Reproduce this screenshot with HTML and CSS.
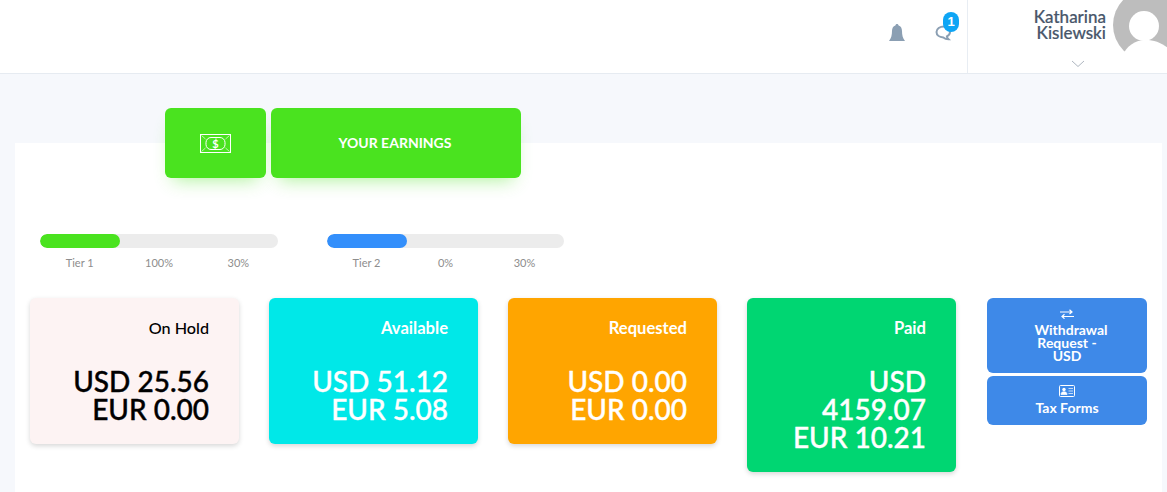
FILE: index.html
```html
<!DOCTYPE html>
<html lang="en">
<head>
<meta charset="utf-8">
<title>Your Earnings</title>
<link rel="stylesheet" href="styles.css">
</head>
<body>
<header class="topbar">
  <div class="icons">
    <svg class="bell" width="18" height="20" viewBox="0 0 18 20"><path d="M9 1c.9 0 1.500.6 1.600 1.500C13 3.300 14 5.400 14 8c0 4 .7 7.200 3 10H1c2.300-2.800 3-6 3-10 0-2.600 1-4.700 3.400-5.500C7.500 1.600 8.100 1 9 1z" fill="#8b9fb3"/></svg>
    <div class="chat">
      <svg width="20" height="20" viewBox="0 0 20 20"><path d="M10 3.500c-4.200 0-7.500 2.300-7.500 5.500 0 3 2.900 5.300 6.800 5.500 1.500 1.300 3.300 1.800 5.200 1.800-1-.9-1.500-1.900-1.600-3 1.900-1 3.100-2.600 3.100-4.300 0-3.200-2-5.500-6-5.500z" fill="none" stroke="#8b9fb3" stroke-width="2"/></svg>
      <span class="badge">1</span>
    </div>
  </div>
  <div class="user">
    <div class="user-text">
      <div class="user-name">Katharina<br>Kislewski</div>
      <svg class="chev" width="14" height="8" viewBox="0 0 14 8"><path d="M1 1l6 5.500L13 1" fill="none" stroke="#aeb6c0" stroke-width="1"/></svg>
    </div>
    <svg class="avatar" width="72" height="72" viewBox="0 0 72 72"><circle cx="36" cy="36" r="36" fill="#bdbdbd"/><circle cx="31" cy="37" r="15" fill="#fff"/><path d="M9 68c4-11 13-17 24-17s24 6 28 17v4H9z" fill="#fff"/></svg>
  </div>
</header>
<main class="content">
  <section class="panel">
    <div class="tabs">
      <div class="tab tab-icon">
        <svg width="31" height="19" viewBox="0 0 31 19"><rect x=".5" y=".5" width="30" height="18" fill="none" stroke="#fff"/><path d="M1.500 1.500l4 3.500M29.500 1.500l-4 3.500M1.500 17.500l4-3.500M29.500 17.500l-4-3.500" fill="none" stroke="#bff2ae"/><rect x="6" y="3.500" width="19" height="12" rx="5" fill="none" stroke="#fff"/></svg>
        <span class="dollar">$</span>
      </div>
      <div class="tab tab-title">YOUR EARNINGS</div>
    </div>
    <div class="tiers">
      <div class="tier">
        <div class="track"><div class="fill fill-green"></div></div>
        <div class="tier-labels"><span>Tier 1</span><span>100%</span><span>30%</span></div>
      </div>
      <div class="tier tier-second">
        <div class="track"><div class="fill fill-blue"></div></div>
        <div class="tier-labels"><span>Tier 2</span><span>0%</span><span>30%</span></div>
      </div>
    </div>
    <div class="cards">
      <div class="card card-hold"><div class="card-title">On Hold</div><div class="card-amount">USD 25.56<br>EUR 0.00</div></div>
      <div class="card card-available"><div class="card-title">Available</div><div class="card-amount">USD 51.12<br>EUR 5.08</div></div>
      <div class="card card-requested"><div class="card-title">Requested</div><div class="card-amount">USD 0.00<br>EUR 0.00</div></div>
      <div class="card card-paid"><div class="card-title">Paid</div><div class="card-amount">USD<br>4159.07<br>EUR 10.21</div></div>
      <div class="actions">
        <button class="action action-tall">
          <svg width="14" height="10" viewBox="0 0 14 10"><path d="M0 3h12M9.500.7L12 3 9.500 5M14 7.500H2M4.500 5.300L2 7.500l2.500 2.200" fill="none" stroke="#fff" stroke-width="1.200"/></svg>
          <span class="action-label"><span class="line-shift">Withdrawal</span><br>Request -<br>USD</span>
        </button>
        <button class="action action-short">
          <svg width="16" height="12" viewBox="0 0 16 12"><rect x=".5" y=".5" width="15" height="11" rx="1" fill="none" stroke="#fff"/><circle cx="5" cy="4.500" r="1.700" fill="#fff"/><path d="M2 9.500c0-2 1.300-2.700 3-2.700s3 .7 3 2.700zM9.500 3.500H14M9.500 6H14M9.500 8.500H14" fill="#fff" stroke="#fff" stroke-width=".7"/></svg>
          <span class="action-label">Tax Forms</span>
        </button>
      </div>
    </div>
  </section>
</main>
</body>
</html>
```
FILE: styles.css
```css
* { box-sizing: border-box; }
html, body { margin: 0; height: 100%; overflow: hidden; }
body { background: #f6f8fc; font-family: "Lato", "Noto Sans", sans-serif; color: #000; }
.topbar { height: 74px; background: #fff; border-bottom: 1px solid #e6ebf1; display: flex; justify-content: flex-end; overflow: hidden; }
.icons { display: flex; align-items: center; gap: 28px; padding: 0 8px 8px 1px; width: 80px; }
.bell { flex: none; margin-top: 1px; }
.chat { position: relative; width: 20px; height: 20px; flex: none; }
.badge { position: absolute; top: -11px; left: 9px; width: 16px; height: 20px; border-radius: 8px; background: #0ea5f5; color: #fff; font: 700 13px/20px "Liberation Sans", sans-serif; text-align: center; }
.user { width: 200px; border-left: 1px solid #e8edf3; display: flex; justify-content: flex-end; }
.user-text { display: flex; flex-direction: column; align-items: flex-end; padding: 9px 7px 0 0; flex: 1; }
.user-name { font-size: 17px; line-height: 16px; font-weight: 500; color: #48566a; text-align: right; -webkit-text-stroke: .2px #48566a; }
.chev { align-self: flex-end; margin: 19px 21px 0 0; }
.avatar { flex: none; margin: -11px -18px 0 0; }
.content { padding: 69px 5px 0 15px; }
.panel { display: flow-root; background: #fff; height: 349px; padding: 0 0 0 15px; }
.tabs { display: flex; gap: 5px; margin: -35px 0 0 135px; }
.tab { height: 70px; background: #4ae31f; border-radius: 6px; box-shadow: 0 10px 18px -8px rgba(74,227,31,.45); color: #fff; display: flex; align-items: center; justify-content: center; }
.tab-icon { width: 101px; position: relative; }
.tab-title { width: 250px; font-size: 14px; font-weight: 700; padding: 0 2px 2px 0; }
.dollar { position: absolute; inset: 0; display: flex; align-items: center; justify-content: center; font-size: 11px; font-weight: 700; }
.tiers { display: flex; margin: 56px 0 0 10px; }
.tier { width: 238px; }
.tier-second { margin-left: 49px; width: 237px; }
.track { height: 14px; border-radius: 7px; background: #ececec; overflow: hidden; }
.fill { height: 100%; width: 80px; border-radius: 7px; }
.fill-green { background: #4ae31f; }
.fill-blue { background: #338ffb; }
.tier-labels { display: grid; grid-template-columns: repeat(3, 1fr); margin-top: 8px; font-size: 11px; line-height: 14px; color: #8d8d8d; text-align: center; }
.cards { display: flex; align-items: flex-start; margin-top: 28px; }
.card { width: 209px; margin-right: 30px; padding: 20px 30px 0 0; border-radius: 6px; text-align: right; color: #fff; box-shadow: 0 2px 5px rgba(0,0,0,.16); flex: none; }
.card-title { font-size: 16.6px; line-height: 20px; font-weight: 700; }
.card-amount { font-size: 28px; line-height: 28px; font-weight: 500; margin-top: 29px; padding-bottom: 21px; -webkit-text-stroke: .4px currentColor; }
.card-hold { background: #fdf3f3; color: #000; }
.card-hold .card-title { font-size: 16.2px; font-weight: 500; }
.card-available { background: #00e8e8; }
.card-requested { background: #ffa500; }
.card-paid { background: #00d672; }
.actions { width: 160px; margin-left: 1px; flex: none; display: flex; flex-direction: column; gap: 3px; }
.action { border: 0; background: #3e89e8; color: #fff; border-radius: 6px; font-family: inherit; font-size: 14px; font-weight: 700; line-height: 13px; display: flex; flex-direction: column; align-items: center; padding: 11px 0 0; }
.action-tall { height: 75px; }
.action-short { height: 49px; padding-top: 9px; }
.action-label { margin-top: 4px; }
.line-shift { padding-left: 8px; }
```
